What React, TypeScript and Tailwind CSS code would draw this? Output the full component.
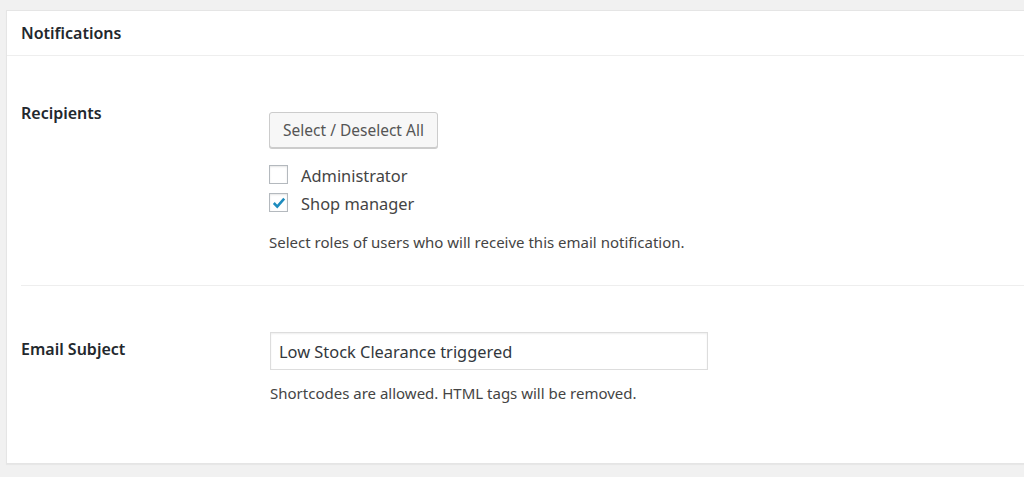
import { useState } from 'react';

const font = { fontFamily: '"Noto Sans", "Open Sans", sans-serif' };

export default function App() {
  const [roles, setRoles] = useState<Record<string, boolean>>({
    administrator: false,
    shop_manager: true,
  });
  const [subject, setSubject] = useState('Low Stock Clearance triggered');

  const toggleAll = () => {
    const all = Object.values(roles).every(Boolean);
    setRoles({ administrator: !all, shop_manager: !all });
  };

  return (
    <div className="min-h-[477px] bg-[#f1f1f1] pt-[10px] pl-[6px]" style={font}>
      <div className="border border-r-0 border-[#e5e5e5] bg-white shadow-[0_1px_1px_rgba(0,0,0,0.04)]">
        {/* header */}
        <div className="flex h-[45px] items-center border-b border-[#eeeeee] px-[14px]">
          <h2 className="text-[16px] font-semibold text-[#23282d]">Notifications</h2>
        </div>

        <div className="pl-[14px]">
          {/* recipients row */}
          <div className="flex pt-[47px] pb-[33px]">
            <div className="w-[248px] shrink-0 text-[16px] leading-5 font-semibold text-[#23282d]">
              Recipients
            </div>
            <div className="pt-[9px]">
              <button
                type="button"
                onClick={toggleAll}
                className="h-[36px] w-[169px] rounded-[3px] border border-[#cccccc] bg-[#f7f7f7] pt-[1px] text-[15.5px] text-[#555555] shadow-[0_1px_0_#cccccc]"
              >
                Select / Deselect All
              </button>
              <div className="mt-[17px] flex flex-col gap-[9px]">
                {[
                  ['administrator', 'Administrator'],
                  ['shop_manager', 'Shop manager'],
                ].map(([key, label]) => (
                  <label key={key} className="flex h-[19px] items-center gap-[13px] text-[16.4px] text-[#444444]">
                    <span
                      onClick={() => setRoles({ ...roles, [key]: !roles[key] })}
                      className="flex h-[19px] w-[19px] items-center justify-center border border-[#b4b9be] bg-white shadow-[inset_0_1px_2px_rgba(0,0,0,0.1)]"
                    >
                      {roles[key] && (
                        <svg width="16" height="16" viewBox="0 0 20 20">
                          <path d="M3.5 10 L7.8 14.5 L16.5 4.5" fill="none" stroke="#1e8cbe" strokeWidth="3.2" />
                        </svg>
                      )}
                    </span>
                    <span className="translate-y-[2px]">{label}</span>
                  </label>
                ))}
              </div>
              <p className="mt-[20px] text-[15px] leading-5 text-[#444444]">
                Select roles of users who will receive this email notification.
              </p>
            </div>
          </div>

          <div className="border-t border-[#eeeeee]" />

          {/* subject row */}
          <div className="flex pt-[46px] pb-[60px]">
            <div className="w-[249px] shrink-0 pt-[7px] text-[16px] leading-5 font-semibold text-[#23282d]">
              Email Subject
            </div>
            <div>
              <input
                value={subject}
                onChange={(e) => setSubject(e.target.value)}
                className="h-[38px] w-[438px] border border-[#dddddd] px-[8px] text-[16.4px] text-[#32373c] shadow-[inset_0_1px_2px_rgba(0,0,0,0.07)] outline-none"
              />
              <p className="mt-[13px] text-[15px] leading-5 text-[#444444]">
                Shortcodes are allowed. HTML tags will be removed.
              </p>
            </div>
          </div>
        </div>
      </div>
    </div>
  );
}
